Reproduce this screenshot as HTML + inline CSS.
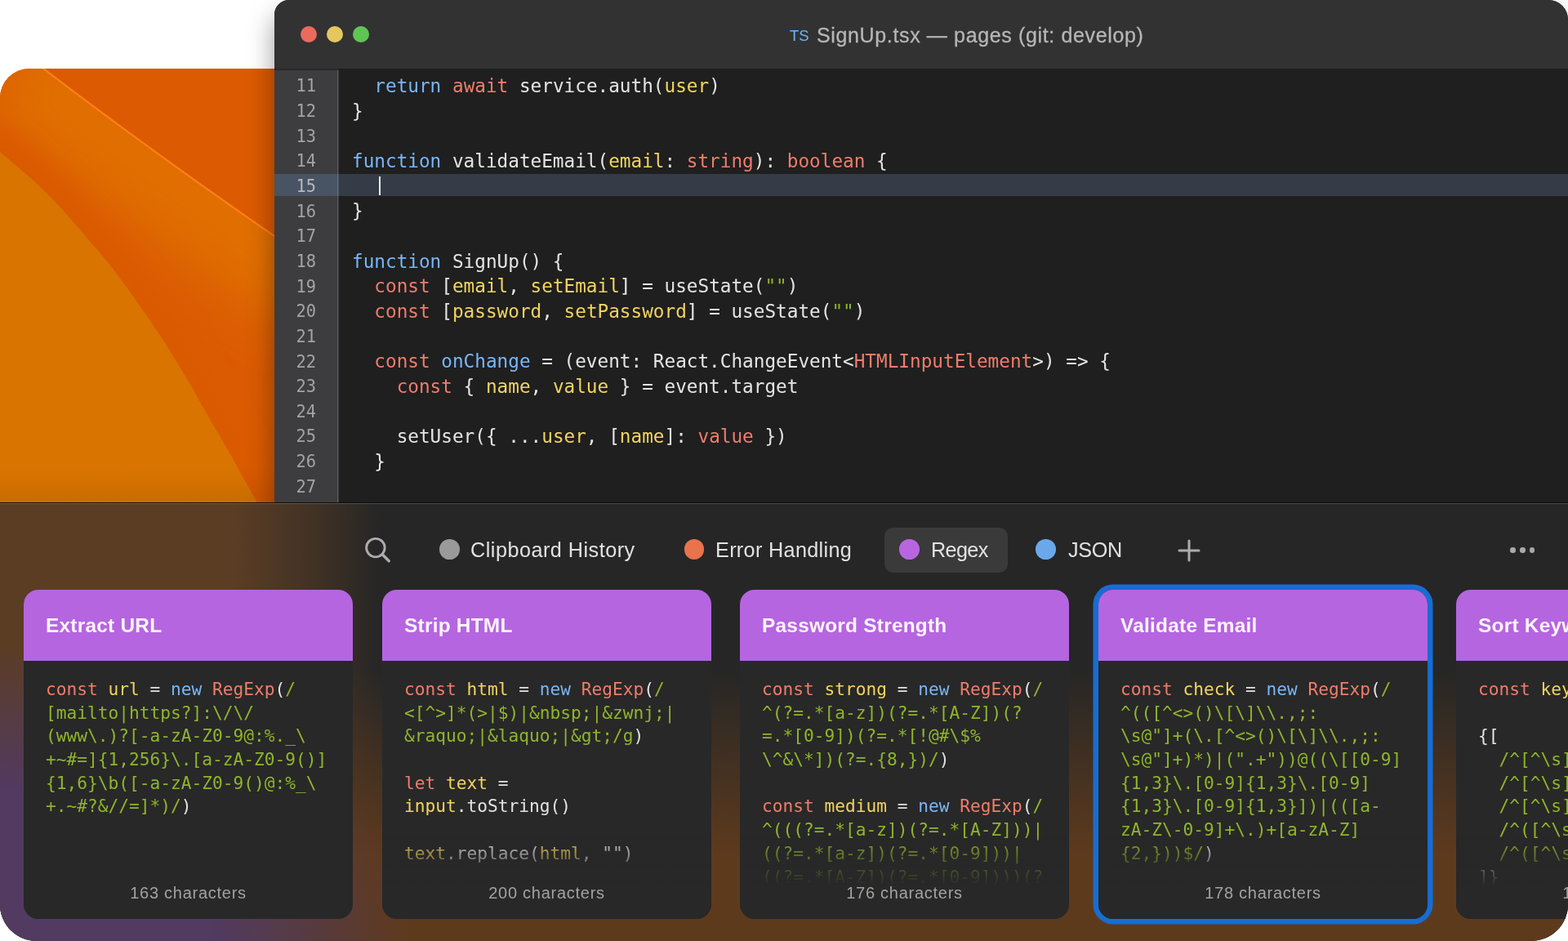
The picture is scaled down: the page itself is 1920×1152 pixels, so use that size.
<!DOCTYPE html>
<html lang="en"><head><meta charset="utf-8"><title>SignUp.tsx — pages</title>
<style>
html,body{margin:0;padding:0}
body{width:1920px;height:1152px;overflow:hidden;position:relative;background:#fff;font-family:"Liberation Sans",sans-serif}
#desktop{position:absolute;left:0;top:84px;width:400px;height:560px;border-radius:36px 0 0 0;overflow:hidden;background:#d97200}
#desktop svg{position:absolute;left:0;top:0}
#win{position:absolute;left:336px;top:0;width:1584px;height:620px;border-radius:18px 24px 0 0;background:#1f1f1f;box-shadow:0 18px 32px 0 rgba(0,0,0,.4);overflow:visible}
#tb{position:absolute;left:0;top:0;width:100%;height:84px;background:#323232;border-radius:18px 24px 0 0}
.tl{position:absolute;top:32px;width:20px;height:20px;border-radius:50%}
#ts{position:absolute;left:630.5px;top:33.5px;font-size:18.5px;line-height:20px;color:#6cb6ff;font-weight:400}
#ttl{position:absolute;left:664px;top:28.7px;-webkit-text-stroke:.3px #b6b6b6;font-size:25px;letter-spacing:.64px;line-height:28px;color:#b6b6b6;white-space:pre}
#gut{position:absolute;left:0;top:84px;height:536px;background:#3d3d3f;width:78.5px;overflow:hidden}
#gutn{position:absolute;left:0;top:84px;width:77px;height:536px}
#gutn .ln{position:static;height:30.667px;line-height:30.667px;font-family:"DejaVu Sans Mono","Liberation Mono",monospace;font-size:20.4px;color:#a3a3a3;text-align:right;padding-right:26px}
#gutn{padding-top:6.3px;box-sizing:border-box}
#gutn .ln.cur{color:#b8b8b8}
#hl{position:absolute;left:78px;top:213px;right:0;height:27px;background:#353c48}
#gb{position:absolute;left:76.8px;top:86px;width:1.6px;height:534px;background:rgba(255,255,255,.15)}
#gt{position:absolute;left:0;top:84px;width:78.5px;height:1.9px;background:#2a2927}
#hlg{position:absolute;left:0;top:213px;width:78.5px;height:27px;background:#485464}
#code{position:absolute;left:95px;top:90.3px;font-family:"DejaVu Sans Mono","Liberation Mono",monospace;font-size:22.7px;color:#e4e4e4;white-space:pre}
.cl{height:30.667px;line-height:30.667px}
.b{color:#78b6f8}.r{color:#ee7d6b}.y{color:#f2d35f}.g{color:#8fb52c}
#cursor{position:absolute;left:128px;top:216px;width:2px;height:23px;background:#e8e8e8}
#panel{position:absolute;left:0;top:615px;width:1920px;height:537px;border-radius:0 0 45px 45px;overflow:hidden;background:#262626}
#pbg{position:absolute;left:0;top:0;width:100%;height:100%;
 background:
  linear-gradient(to bottom,#0b0b0b 0,#0b0b0b 1px,rgba(255,255,255,.17) 1px,rgba(255,255,255,.17) 2px,transparent 2px),
  radial-gradient(ellipse 500px 360px at 0 100%,#523a60 0,#523a60 52%,rgba(82,58,96,0) 100%),
  linear-gradient(to right,#5b3d24 0,#5b3d24 285px,rgba(91,61,36,.5) 385px,rgba(91,61,36,0) 465px),
  linear-gradient(to top,#5e3a1d 0,#5e3a1d 105px,rgba(94,58,29,0) 332px),
  #262626}
#search{position:absolute;left:440px;top:35px}
.tab{position:absolute;top:45.5px;height:25px;white-space:nowrap}
.tab i{position:absolute;left:0.2px;top:-.2px;width:24.7px;height:24.7px;border-radius:50%}
.tab span{position:absolute;left:39.5px;top:-2.6px;font-size:25.2px;line-height:30px;color:#e2e2e2}
#pill{position:absolute;left:1082.8px;top:31.1px;width:151.7px;height:55.1px;border-radius:10.5px;background:#3a3a3a}
#plus{position:absolute;left:1441.6px;top:44.5px}
#more{position:absolute;left:1849.4px;top:55.4px;width:32px;height:7px}
#more i{position:absolute;top:0;width:6.4px;height:6.4px;border-radius:50%;background:#a9a9a9}
#more i:nth-child(1){left:0}#more i:nth-child(2){left:11.8px}#more i:nth-child(3){left:23.6px}
.card{position:absolute;top:107px;width:403px;height:403px;border-radius:18px;background:#282828;overflow:hidden}
.card.sel{overflow:visible;box-shadow:0 0 0 6.5px #176dd2}
.card.sel .ch{border-radius:18px 18px 0 0}
.ch{position:absolute;left:0;top:0;width:100%;height:87.3px;background:#b565e0}
.ch span{position:absolute;left:27px;top:29px;font-size:24.4px;letter-spacing:.25px;line-height:30px;font-weight:700;color:#fbf4ff;white-space:nowrap}
.cb{position:absolute;left:26.8px;top:107.8px;font-family:"DejaVu Sans Mono","Liberation Mono",monospace;font-size:21.18px;color:#e2e2e2;white-space:pre}
.kl{height:28.7px;line-height:28.7px}
.fade{position:absolute;left:0;top:300px;width:100%;height:103px;background:linear-gradient(to bottom,rgba(40,40,40,0) 0,rgba(40,40,40,.55) 30px,#282828 62px,#282828 100%);border-radius:0 0 18px 18px}
.cf{position:absolute;left:0;top:359px;width:100%;text-align:center;font-size:20px;letter-spacing:.73px;line-height:24px;color:#a2a2a2}

#code,#gutn,.cb,.cf,.ch span,.tab span,#ttl,#ts{will-change:transform}

</style></head>
<body>
<div id="desktop"><svg width="400" height="560" viewBox="0 84 400 560">
<defs>
<filter id="bl" filterUnits="userSpaceOnUse" x="-300" y="-200" width="1100" height="1200"><feGaussianBlur stdDeviation="32"/></filter>
<filter id="bl2" filterUnits="userSpaceOnUse" x="-300" y="-200" width="1100" height="1200"><feGaussianBlur stdDeviation="14"/></filter>
<linearGradient id="bsh" gradientUnits="userSpaceOnUse" x1="0" y1="572" x2="0" y2="616">
<stop offset="0" stop-color="#000" stop-opacity="0"/><stop offset="1" stop-color="#000" stop-opacity=".07"/>
</linearGradient>
</defs>
<rect x="0" y="84" width="400" height="560" fill="#db5b03"/>
<path d="M30 66.3 L54.3 84.9 Q184 184.1 336 289 L400 333.2" fill="none" stroke="#e06e04" stroke-width="175" filter="url(#bl)"/>
<path d="M-20.0 170.0 C-10.0 177.7 -13.2 174.6 0.0 186.0 C13.2 197.4 39.3 218.4 59.0 238.2 C78.7 258.0 103.2 287.4 118.0 304.6 C132.8 321.8 137.8 328.5 147.6 341.5 C157.4 354.5 167.2 368.6 177.0 382.8 C186.8 397.1 196.8 411.5 206.6 427.0 C216.4 442.5 228.9 463.6 236.0 475.8 C243.1 488.0 242.3 487.6 249.4 500.0 C256.5 512.4 270.5 536.0 278.5 550.0 C286.5 564.0 291.5 573.2 297.5 584.0 C303.5 594.8 309.9 606.3 314.6 615.0 C319.4 623.7 321.8 628.2 326.0 636.0" fill="none" stroke="#da5a03" stroke-width="56" filter="url(#bl2)"/>
<path d="M30 66.3 L54.3 84.9 Q184 184.1 336 289 L400 333.2 L400 40 L10 40 Z" fill="#dc5a02"/>
<path d="M30 66.3 L54.3 84.9 Q184 184.1 336 289 L400 333.2" fill="none" stroke="#ff7f16" stroke-width="2.2"/>
<path d="M-20.0 170.0 C-10.0 177.7 -13.2 174.6 0.0 186.0 C13.2 197.4 39.3 218.4 59.0 238.2 C78.7 258.0 103.2 287.4 118.0 304.6 C132.8 321.8 137.8 328.5 147.6 341.5 C157.4 354.5 167.2 368.6 177.0 382.8 C186.8 397.1 196.8 411.5 206.6 427.0 C216.4 442.5 228.9 463.6 236.0 475.8 C243.1 488.0 242.3 487.6 249.4 500.0 C256.5 512.4 270.5 536.0 278.5 550.0 C286.5 564.0 291.5 573.2 297.5 584.0 C303.5 594.8 309.9 606.3 314.6 615.0 C319.4 623.7 321.8 628.2 326.0 636.0 L340 700 L-60 700 Z" fill="#d97400"/>
<rect x="0" y="572" width="340" height="44" fill="url(#bsh)"/>
</svg>
</div>
<div id="win">
  <div id="tb">
    <i class="tl" style="left:32px;background:#ea6b5d"></i><i class="tl" style="left:64px;background:#e4c75e"></i><i class="tl" style="left:96px;background:#60c454"></i>
    <span id="ts">TS</span><span id="ttl">SignUp.tsx — pages (git: develop)</span>
  </div>
  <div id="gut"></div>
  <div id="hl"></div><div id="hlg"></div>
  <div id="gb"></div><div id="gt"></div>
  <div id="gutn"><div class="ln">11</div><div class="ln">12</div><div class="ln">13</div><div class="ln">14</div><div class="ln cur">15</div><div class="ln">16</div><div class="ln">17</div><div class="ln">18</div><div class="ln">19</div><div class="ln">20</div><div class="ln">21</div><div class="ln">22</div><div class="ln">23</div><div class="ln">24</div><div class="ln">25</div><div class="ln">26</div><div class="ln">27</div></div>
  <div id="code"><div class="cl">  <span class="b">return</span> <span class="r">await</span> service.auth(<span class="y">user</span>)</div><div class="cl">}</div><div class="cl">&nbsp;</div><div class="cl"><span class="b">function</span> validateEmail(<span class="y">email</span>: <span class="r">string</span>): <span class="r">boolean</span> {</div><div class="cl cur">&nbsp;</div><div class="cl">}</div><div class="cl">&nbsp;</div><div class="cl"><span class="b">function</span> SignUp() {</div><div class="cl">  <span class="r">const</span> [<span class="y">email</span>, <span class="y">setEmail</span>] = useState(<span class="g">""</span>)</div><div class="cl">  <span class="r">const</span> [<span class="y">password</span>, <span class="y">setPassword</span>] = useState(<span class="g">""</span>)</div><div class="cl">&nbsp;</div><div class="cl">  <span class="r">const</span> <span class="b">onChange</span> = (event: React.ChangeEvent&lt;<span class="r">HTMLInputElement</span>&gt;) =&gt; {</div><div class="cl">    <span class="r">const</span> { <span class="y">name</span>, <span class="y">value</span> } = event.target</div><div class="cl">&nbsp;</div><div class="cl">    setUser({ ...<span class="y">user</span>, [<span class="y">name</span>]: <span class="r">value</span> })</div><div class="cl">  }</div><div class="cl">&nbsp;</div></div>
  <div id="cursor"></div>
</div>
<div id="panel">
  <div id="pbg"></div>
  <svg id="search" width="44" height="44" viewBox="0 0 44 44"><circle cx="19.9" cy="20.6" r="11.25" fill="none" stroke="#acacae" stroke-width="2.9"/><path d="M28.2 28.8 L36.2 36.8" stroke="#acacae" stroke-width="3.5" stroke-linecap="round"/></svg>
  <div class="tab" style="left:538px"><i style="background:#9a9a9a"></i><span id="t1" style="letter-spacing:.5px;margin-left:-1.2px">Clipboard History</span></div>
  <div class="tab" style="left:837.5px"><i style="background:#e8734c"></i><span id="t2" style="letter-spacing:.34px;margin-left:-1.4px">Error Handling</span></div>
  <div id="pill"></div>
  <div class="tab" style="left:1100.8px"><i style="background:#b866e0"></i><span id="t3" style="letter-spacing:-.64px">Regex</span></div>
  <div class="tab" style="left:1268px"><i style="background:#6aa8ea"></i><span id="t4" style="letter-spacing:-.35px">JSON</span></div>
  <svg id="plus" width="28" height="28" viewBox="0 0 28 28"><path d="M14 2V26M2 14H26" stroke="#acacae" stroke-width="3" stroke-linecap="round"/></svg>
  <div id="more"><i></i><i></i><i></i></div>
  <div class="card" style="left:29.25px"><div class="ch"><span>Extract URL</span></div><div class="cb"><div class="kl"><span class="r">const</span> <span class="y">url</span> = <span class="b">new</span> <span class="r">RegExp</span>(<span class="g">/</span></div><div class="kl"><span class="g">[mailto|https?]:\/\/</span></div><div class="kl"><span class="g">(www\.)?[-a-zA-Z0-9@:%._\</span></div><div class="kl"><span class="g">+~#=]{1,256}\.[a-zA-Z0-9()]</span></div><div class="kl"><span class="g">{1,6}\b([-a-zA-Z0-9()@:%_\</span></div><div class="kl"><span class="g">+.~#?&amp;//=]*)/</span>)</div></div><div class="fade"></div><div class="cf">163 characters</div></div>
<div class="card" style="left:467.75px"><div class="ch"><span>Strip HTML</span></div><div class="cb"><div class="kl"><span class="r">const</span> <span class="y">html</span> = <span class="b">new</span> <span class="r">RegExp</span>(<span class="g">/</span></div><div class="kl"><span class="g">&lt;[^&gt;]*(&gt;|$)|&amp;nbsp;|&amp;zwnj;|</span></div><div class="kl"><span class="g">&amp;raquo;|&amp;laquo;|&amp;gt;/g</span>)</div><div class="kl">&nbsp;</div><div class="kl"><span class="r">let</span> <span class="y">text</span> =</div><div class="kl"><span class="y">input</span>.toString()</div><div class="kl">&nbsp;</div><div class="kl"><span class="y">text</span>.replace(<span class="y">html</span>, "")</div></div><div class="fade"></div><div class="cf">200 characters</div></div>
<div class="card" style="left:906.25px"><div class="ch"><span>Password Strength</span></div><div class="cb"><div class="kl"><span class="r">const</span> <span class="y">strong</span> = <span class="b">new</span> <span class="r">RegExp</span>(<span class="g">/</span></div><div class="kl"><span class="g">^(?=.*[a-z])(?=.*[A-Z])(?</span></div><div class="kl"><span class="g">=.*[0-9])(?=.*[!@#\$%</span></div><div class="kl"><span class="g">\^&amp;\*])(?=.{8,})/</span>)</div><div class="kl">&nbsp;</div><div class="kl"><span class="r">const</span> <span class="y">medium</span> = <span class="b">new</span> <span class="r">RegExp</span>(<span class="g">/</span></div><div class="kl"><span class="g">^(((?=.*[a-z])(?=.*[A-Z]))|</span></div><div class="kl"><span class="g">((?=.*[a-z])(?=.*[0-9]))|</span></div><div class="kl"><span class="g">((?=.*[A-Z])(?=.*[0-9])))(?</span></div></div><div class="fade"></div><div class="cf">176 characters</div></div>
<div class="card sel" style="left:1344.75px"><div class="ch"><span>Validate Email</span></div><div class="cb"><div class="kl"><span class="r">const</span> <span class="y">check</span> = <span class="b">new</span> <span class="r">RegExp</span>(<span class="g">/</span></div><div class="kl"><span class="g">^(([^&lt;&gt;()\[\]\\.,;:</span></div><div class="kl"><span class="g">\s@"]+(\.[^&lt;&gt;()\[\]\\.,;:</span></div><div class="kl"><span class="g">\s@"]+)*)|(".+"))@((\[[0-9]</span></div><div class="kl"><span class="g">{1,3}\.[0-9]{1,3}\.[0-9]</span></div><div class="kl"><span class="g">{1,3}\.[0-9]{1,3}])|(([a-</span></div><div class="kl"><span class="g">zA-Z\-0-9]+\.)+[a-zA-Z]</span></div><div class="kl"><span class="g">{2,}))$/</span>)</div></div><div class="fade"></div><div class="cf">178 characters</div></div>
<div class="card" style="left:1783.25px"><div class="ch"><span>Sort Keywords</span></div><div class="cb"><div class="kl"><span class="r">const</span> <span class="y">keywords</span> = </div><div class="kl">&nbsp;</div><div class="kl">{[</div><div class="kl">  <span class="g">/^[^\s]+$/,</span></div><div class="kl">  <span class="g">/^[^\s]+\s/,</span></div><div class="kl">  <span class="g">/^[^\s]+\s+/,</span></div><div class="kl">  <span class="g">/^([^\s]+)/,</span></div><div class="kl">  <span class="g">/^([^\s]+)\s/</span></div><div class="kl">]}</div></div><div class="fade"></div><div class="cf">156 characters</div></div>

</div>
</body></html>
